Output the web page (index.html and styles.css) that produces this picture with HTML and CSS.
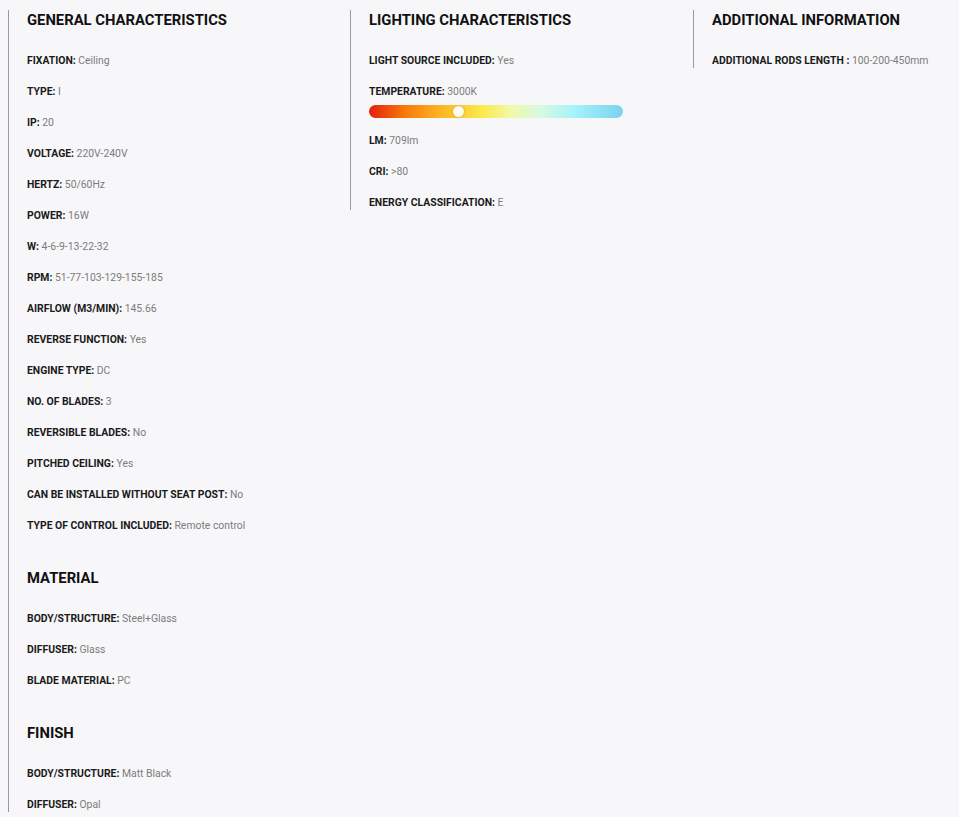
FILE: index.html
```html
<!DOCTYPE html>
<html lang="en">
<head>
  <meta charset="UTF-8">
  <meta name="viewport" content="width=device-width, initial-scale=1.0">
  <title>Specifications</title>
  <link rel="stylesheet" href="styles.css">
</head>
<body>
  <div class="specs">
    <div class="spec-col">
      <section class="spec-group">
        <h2>GENERAL CHARACTERISTICS</h2>
        <p class="spec-row"><b>FIXATION:</b> <span>Ceiling</span></p>
        <p class="spec-row"><b>TYPE:</b> <span>I</span></p>
        <p class="spec-row"><b>IP:</b> <span>20</span></p>
        <p class="spec-row"><b>VOLTAGE:</b> <span>220V-240V</span></p>
        <p class="spec-row"><b>HERTZ:</b> <span>50/60Hz</span></p>
        <p class="spec-row"><b>POWER:</b> <span>16W</span></p>
        <p class="spec-row"><b>W:</b> <span>4-6-9-13-22-32</span></p>
        <p class="spec-row"><b>RPM:</b> <span>51-77-103-129-155-185</span></p>
        <p class="spec-row"><b>AIRFLOW (M3/MIN):</b> <span>145.66</span></p>
        <p class="spec-row"><b>REVERSE FUNCTION:</b> <span>Yes</span></p>
        <p class="spec-row"><b>ENGINE TYPE:</b> <span>DC</span></p>
        <p class="spec-row"><b>NO. OF BLADES:</b> <span>3</span></p>
        <p class="spec-row"><b>REVERSIBLE BLADES:</b> <span>No</span></p>
        <p class="spec-row"><b>PITCHED CEILING:</b> <span>Yes</span></p>
        <p class="spec-row"><b>CAN BE INSTALLED WITHOUT SEAT POST:</b> <span>No</span></p>
        <p class="spec-row"><b>TYPE OF CONTROL INCLUDED:</b> <span>Remote control</span></p>
      </section>
      <section class="spec-group">
        <h2>MATERIAL</h2>
        <p class="spec-row"><b>BODY/STRUCTURE:</b> <span>Steel+Glass</span></p>
        <p class="spec-row"><b>DIFFUSER:</b> <span>Glass</span></p>
        <p class="spec-row"><b>BLADE MATERIAL:</b> <span>PC</span></p>
      </section>
      <section class="spec-group">
        <h2>FINISH</h2>
        <p class="spec-row"><b>BODY/STRUCTURE:</b> <span>Matt Black</span></p>
        <p class="spec-row"><b>DIFFUSER:</b> <span>Opal</span></p>
      </section>
    </div>

    <div class="spec-col">
      <section class="spec-group">
        <h2>LIGHTING CHARACTERISTICS</h2>
        <p class="spec-row"><b>LIGHT SOURCE INCLUDED:</b> <span>Yes</span></p>
        <p class="spec-row"><b>TEMPERATURE:</b> <span>3000K</span></p>
        <div class="temp-bar">
          <div class="temp-knob" style="left: 35%"></div>
        </div>
        <p class="spec-row"><b>LM:</b> <span>709lm</span></p>
        <p class="spec-row"><b>CRI:</b> <span>&gt;80</span></p>
        <p class="spec-row"><b>ENERGY CLASSIFICATION:</b> <span>E</span></p>
      </section>
    </div>

    <div class="spec-col">
      <section class="spec-group">
        <h2>ADDITIONAL INFORMATION</h2>
        <p class="spec-row"><b>ADDITIONAL RODS LENGTH :</b> <span>100-200-450mm</span></p>
      </section>
    </div>
  </div>
</body>
</html>
```

FILE: styles.css
```css
* {
  margin: 0;
  padding: 0;
  box-sizing: border-box;
}

body {
  font-family: Roboto, 'Liberation Sans', sans-serif;
  background: #f7f7f9;
  color: #111;
  padding: 10px 0 0 8px;
  overflow: hidden;
}

.specs {
  display: grid;
  grid-template-columns: 342px 343px 1fr;
  align-items: start;
}

.spec-col {
  border-left: 1px solid #9a9a9a;
  padding-left: 18px;
}

.spec-group + .spec-group {
  margin-top: 35px;
}

.spec-group h2 {
  font-size: 14.8px;
  font-weight: 700;
  line-height: 21px;
  color: #111;
  margin-bottom: 23px;
}

.spec-row {
  font-size: 10.4px;
  line-height: 14px;
  margin-top: 17px;
  white-space: nowrap;
}

.spec-row b {
  font-weight: 700;
  color: #1a1a1a;
}

.spec-row span {
  color: #7c7c7c;
}

.temp-bar {
  position: relative;
  width: 254px;
  height: 13px;
  margin-top: 6px;
  border-radius: 7px;
  background: linear-gradient(90deg, #e51f0c 0%, #f6790c 14%, #fdb424 28%, #fbe84a 44%, #f2f9a8 56%, #d4f9e4 68%, #a8f4f8 80%, #7ad2f2 100%);
}

.temp-bar + .spec-row {
  margin-top: 16px;
}

.temp-knob {
  position: absolute;
  top: 1px;
  width: 11px;
  height: 11px;
  margin-left: -5px;
  border-radius: 50%;
  background: #fffdf0;
  box-shadow: 0 0 2px rgba(120, 100, 0, 0.5);
}
```
